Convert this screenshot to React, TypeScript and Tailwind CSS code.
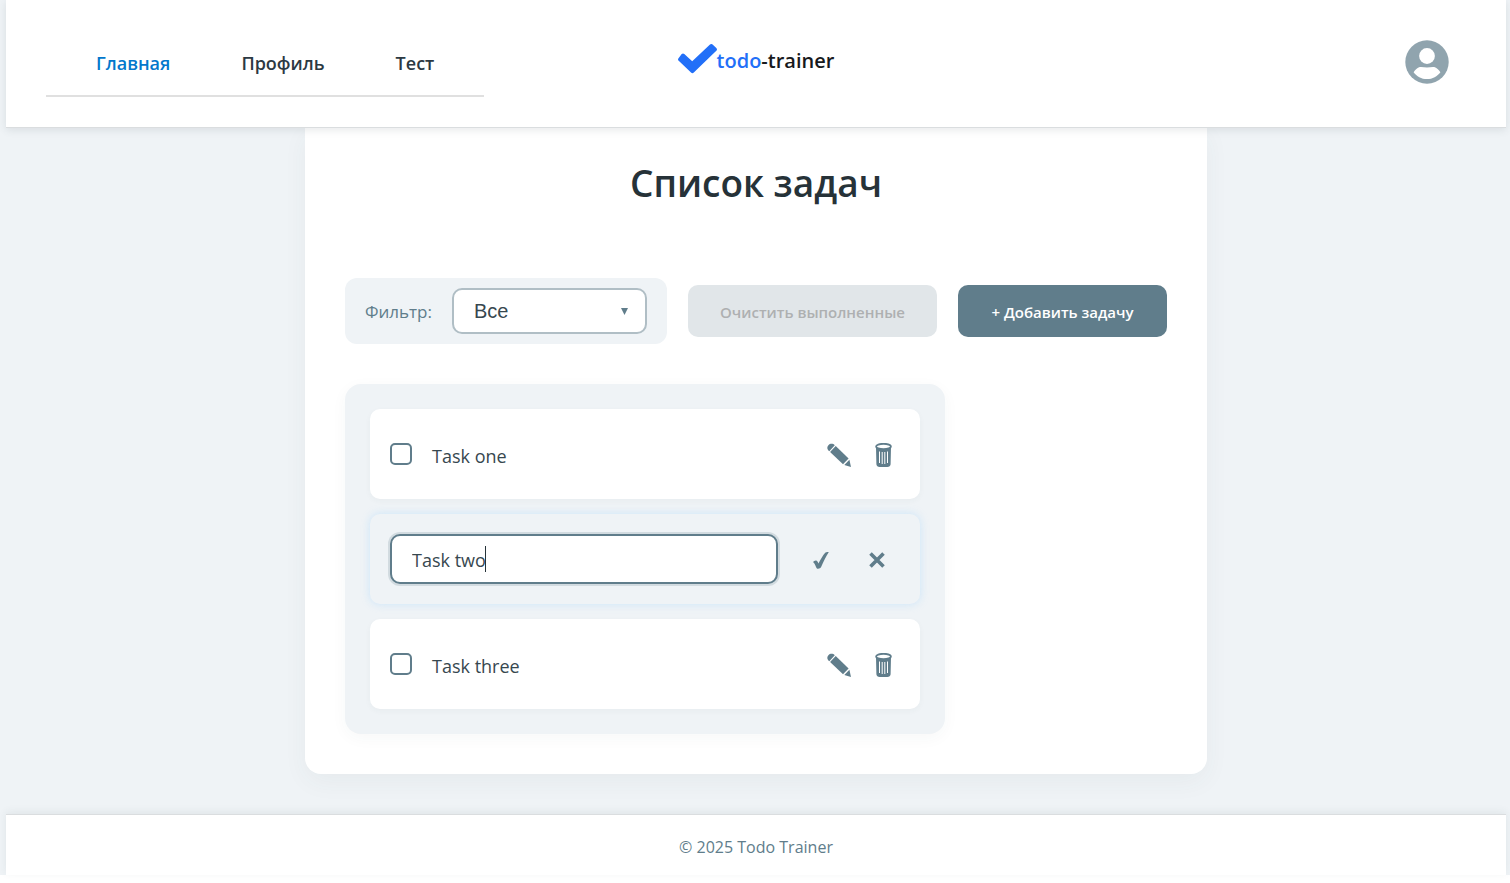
import { useEffect, useRef, useState } from 'react';

type Task = { id: number; title: string; done: boolean };

const initialTasks: Task[] = [
  { id: 1, title: 'Task one', done: false },
  { id: 2, title: 'Task two', done: false },
  { id: 3, title: 'Task three', done: false },
];

const links = [
  { label: 'Главная', active: true },
  { label: 'Профиль', active: false },
  { label: 'Тест', active: false },
];

function PencilIcon() {
  return (
    <svg width="24" height="24" viewBox="0 0 24 24" fill="currentColor" aria-hidden="true">
      <path d="M1.400 2.200C3.200.2 6 .3 7.800 2.200L2.300 8.200C0 6.500-.3 4 1.400 2.200z" />
      <path d="M8.700 3.100l12.900 12.300-5.600 5.800L3.100 9.100z" />
      <path d="M22.400 16.800L24 24l-6.700-1.900z" />
    </svg>
  );
}

function TrashIcon() {
  return (
    <svg width="17" height="24" viewBox="0 0 17 24" fill="none" aria-hidden="true">
      <path
        d="M1 4h15l-.4 17.200c0 1.600-1.500 2.800-3.200 2.800H4.600c-1.700 0-3.200-1.200-3.200-2.800z"
        fill="currentColor"
      />
      <ellipse cx="8.500" cy="3.500" rx="7.400" ry="2.700" fill="white" stroke="currentColor" strokeWidth="1.800" />
      <path d="M4.500 8.500v11.500M7.200 9v12M9.800 9v12M12.500 8.500v11.500" stroke="white" strokeWidth="1" />
    </svg>
  );
}

function CheckIcon() {
  return (
    <svg width="16" height="17" viewBox="0 0 16 17" fill="currentColor" aria-hidden="true">
      <path d="M0 10.200C.8 9 2.500 8.100 3.700 8.800c.8.400 1.200 1.500 1.700 2.700C7.600 7.400 9.800 3.300 12 .9c.8-.7 2.400-.9 3.800-.8C13 4.300 10.300 10 8 15.300c-.6 1.400-3.500 1.900-4.300.9C2.700 14.800 1.800 10.700 0 10.200z" />
    </svg>
  );
}

function CrossIcon() {
  return (
    <svg width="16" height="16" viewBox="0 0 16 16" stroke="currentColor" strokeWidth="3.600" aria-hidden="true">
      <path d="M1.500 1.500l13 13M14.500 1.500l-13 13" />
    </svg>
  );
}

function AvatarIcon() {
  return (
    <svg width="44" height="44" viewBox="0 0 44 44" aria-hidden="true">
      <circle cx="22" cy="22" r="21.700" fill="#90a4ae" />
      <circle cx="22" cy="16" r="7.900" fill="white" />
      <path
        d="M8.600 32.200c1.500-2.200 3.800-4.600 6.200-5.200 2.500-.3 4.700.5 7.200.5s4.700-.8 7.200-.5c2.400.6 4.700 3 6.200 5.200-3 4-7.900 6.900-13.400 6.900S11.600 36.200 8.600 32.200z"
        fill="white"
      />
    </svg>
  );
}

function Header() {
  return (
    <header className="relative z-10 grid h-32 grid-cols-3 items-start border-b border-[#dadddf] bg-white px-10 shadow-[0_2px_8px_rgba(55,71,79,0.12)]">
      <nav className="mt-7 w-fit border-b-2 border-[#e0e0e0] px-[50px]">
        <ul className="flex h-[67px] items-center gap-[71px] pt-1">
          {links.map((link) => (
            <li key={link.label}>
              <a
                href="#"
                className={
                  link.active
                    ? 'text-[18px] font-semibold whitespace-nowrap text-[#0277cc]'
                    : 'text-[18px] font-semibold whitespace-nowrap text-[#2c3943]'
                }
              >
                {link.label}
              </a>
            </li>
          ))}
        </ul>
      </nav>
      <a href="#" className="mt-11 flex items-start justify-self-center">
        <svg width="39" height="30" viewBox="0 0 39 30" aria-hidden="true">
          <path
            d="M3.700 10a1.900 1.900 0 0 1 2.600 0l7.900 7.300L32 .6a1.900 1.900 0 0 1 2.600 0l3.700 3.500a1.900 1.900 0 0 1 0 2.700L15.800 28.500a2 2 0 0 1-2.800 0L.7 16.800a1.900 1.900 0 0 1 0-2.700z"
            fill="#226ff8"
          />
        </svg>
        <span className="mt-1 text-[20px] leading-[26px] font-semibold text-[#17191c]">
          <span className="text-[#226ff8]">todo</span>-trainer
        </span>
      </a>
      <button type="button" aria-label="Профиль" className="mt-10 mr-[17px] justify-self-end">
        <AvatarIcon />
      </button>
    </header>
  );
}

export default function App() {
  const [tasks, setTasks] = useState(initialTasks);
  const [editing, setEditing] = useState<number | null>(2);
  const [draft, setDraft] = useState('Task two');
  const [pristine, setPristine] = useState(true);
  const inputRef = useRef<HTMLInputElement>(null);

  useEffect(() => {
    const input = inputRef.current;
    if (input) {
      input.focus();
      input.setSelectionRange(input.value.length, input.value.length);
    }
  }, [editing]);

  const save = () => {
    setTasks(tasks.map((t) => (t.id === editing ? { ...t, title: draft } : t)));
    setEditing(null);
  };

  return (
    <div className="flex min-h-screen flex-col bg-white pb-2 font-['Open_Sans',sans-serif] text-[#37474f]">
      <div className="flex flex-1 flex-col bg-[#eff3f6] pr-1 pl-1.5">
        <Header />
        <main className="mx-auto w-full max-w-[902px] rounded-b-2xl bg-white px-10 pt-7 pb-10 shadow-[0_8px_24px_rgba(55,71,79,0.05)]">
          <h1 className="text-center text-[37px] leading-[54px] font-semibold text-[#263238]">Список задач</h1>

          <div className="mt-[68px] flex items-center justify-between">
            <div className="flex h-[66px] items-center gap-5 rounded-xl bg-[#eff3f6] px-5">
              <label htmlFor="filter" className="pt-0.5 text-[17px] text-[#607d8b]">
                Фильтр:
              </label>
              <div className="relative">
                <select
                  id="filter"
                  className="h-[46px] w-[195px] appearance-none rounded-[10px] border-2 border-[#b0bec5] bg-white px-5 font-['Liberation_Sans',sans-serif] text-[20px] text-[#37474f]"
                >
                  <option>Все</option>
                  <option>Активные</option>
                  <option>Выполненные</option>
                </select>
                <svg
                  className="pointer-events-none absolute top-5 right-[19px]"
                  width="7"
                  height="7"
                  viewBox="0 0 7 7"
                  fill="#607d8b"
                  aria-hidden="true"
                >
                  <path d="M0 0h7L3.500 7z" />
                </svg>
              </div>
            </div>
            <button
              type="button"
              disabled
              className="h-[52px] w-[249px] rounded-[10px] bg-[#e1e6e9] pt-0.5 text-[15px] font-semibold whitespace-nowrap text-[#aeb0b1]"
            >
              Очистить выполненные
            </button>
            <button
              type="button"
              className="h-[52px] w-[209px] rounded-[10px] bg-[#607d8b] pt-0.5 text-[15px] font-semibold whitespace-nowrap text-white"
            >
              + Добавить задачу
            </button>
          </div>

          <ul className="mt-10 flex max-w-[600px] flex-col gap-[15px] rounded-2xl bg-[#eff3f6] p-[25px] shadow-[0_4px_16px_rgba(55,71,79,0.04)]">
            {tasks.map((task) =>
              task.id === editing ? (
                <li
                  key={task.id}
                  className="flex h-[90px] items-center rounded-[10px] bg-[#eff3f6] pr-[35px] pl-5 shadow-[0_0_8px_rgba(187,222,251,0.7)]"
                >
                  <div className="relative flex min-w-0 flex-1">
                    <input
                      ref={inputRef}
                      type="text"
                      aria-label="Название задачи"
                      value={draft}
                      onChange={(e) => {
                        setDraft(e.target.value);
                        setPristine(false);
                      }}
                      className="h-[50px] w-full rounded-[10px] border-2 border-[#607d8b] bg-white px-5 pt-0.5 text-[18px] text-[#37474f] shadow-[0_0_0_2px_rgba(96,125,139,0.2)] outline-none"
                    />
                    {pristine && (
                      <span className="pointer-events-none absolute top-3 left-[95px] h-[26px] w-px bg-[#263238]" />
                    )}
                  </div>
                  <div className="ml-[35px] flex items-center gap-10 pt-0.5 text-[#607d8b]">
                    <button type="button" aria-label="Сохранить" onClick={save}>
                      <CheckIcon />
                    </button>
                    <button type="button" aria-label="Отмена" onClick={() => setEditing(null)}>
                      <CrossIcon />
                    </button>
                  </div>
                </li>
              ) : (
                <li
                  key={task.id}
                  className="flex h-[90px] items-center rounded-[10px] bg-white pr-7 pl-5 shadow-[0_2px_6px_rgba(55,71,79,0.04)]"
                >
                  <input
                    id={`task-${task.id}`}
                    type="checkbox"
                    checked={task.done}
                    onChange={() => setTasks(tasks.map((t) => (t.id === task.id ? { ...t, done: !t.done } : t)))}
                    className="size-[22px] appearance-none rounded-[5px] border-2 border-[#607d8b] bg-white checked:bg-[#607d8b]"
                  />
                  <label htmlFor={`task-${task.id}`} className="flex-1 pt-1 pl-5 text-[18px]">
                    {task.title}
                  </label>
                  <div className="flex items-center gap-6 pt-0.5 text-[#607d8b]">
                    <button
                      type="button"
                      aria-label="Редактировать"
                      onClick={() => {
                        setDraft(task.title);
                        setPristine(false);
                        setEditing(task.id);
                      }}
                    >
                      <PencilIcon />
                    </button>
                    <button
                      type="button"
                      aria-label="Удалить"
                      onClick={() => setTasks(tasks.filter((t) => t.id !== task.id))}
                    >
                      <TrashIcon />
                    </button>
                  </div>
                </li>
              ),
            )}
          </ul>
        </main>
        <footer className="mt-10 flex flex-1 items-center justify-center border-t border-[#dadddf] bg-white pt-1 text-[16px] text-[#607d8b] shadow-[0_-2px_8px_rgba(55,71,79,0.08)]">
          © 2025 Todo Trainer
        </footer>
      </div>
    </div>
  );
}
